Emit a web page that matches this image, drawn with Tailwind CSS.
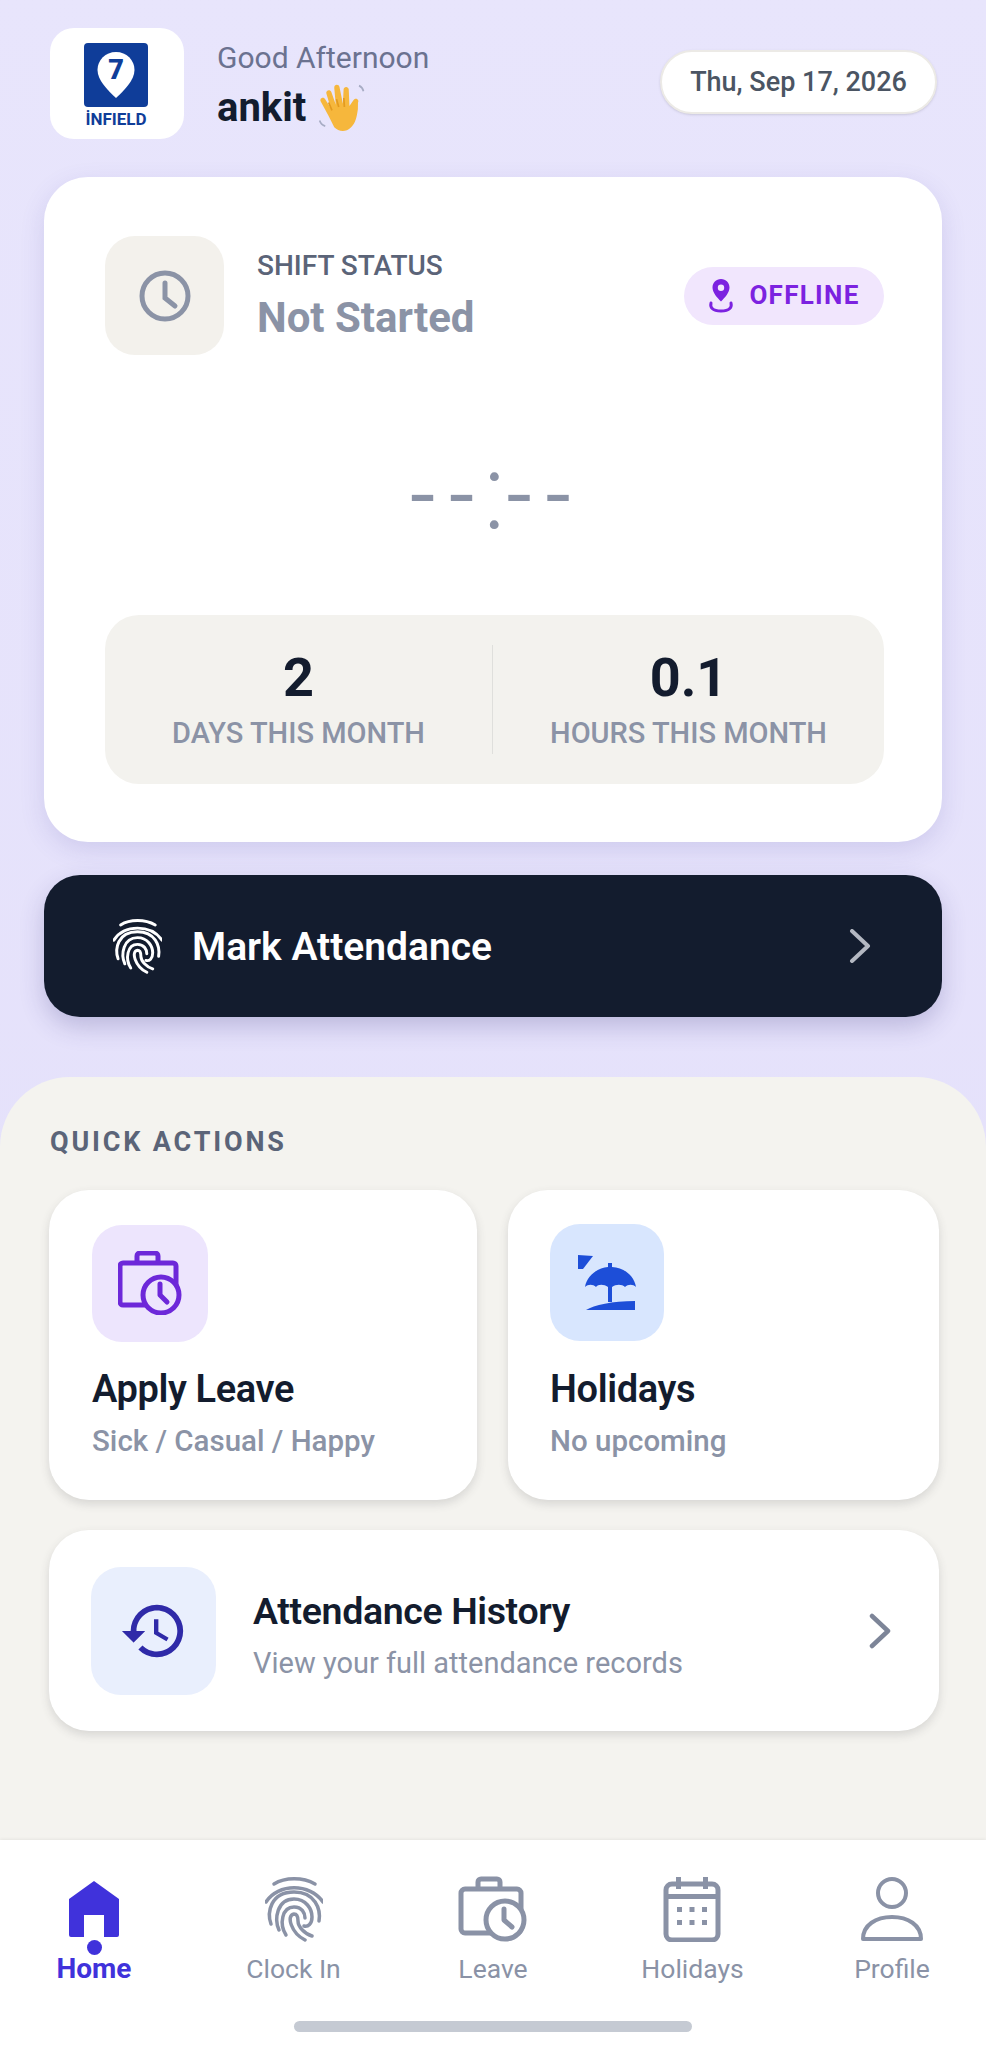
<!doctype html>
<html lang="en">
<head>
<meta charset="utf-8">
<title>Infield</title>
<script src="https://cdn.jsdelivr.net/npm/@tailwindcss/browser@4"></script>
</head>
<body class="font-['Roboto',sans-serif]">
<div class="w-[986px] h-[2048px] overflow-hidden flex flex-col bg-gradient-to-b from-[#e8e5fc] to-[#e3dffa]">

  <!-- header -->
  <header class="flex items-center justify-between pl-[50px] pr-[49px] pt-[28px]">
    <div class="flex items-center gap-[33px]">
      <div class="w-[134px] h-[111px] bg-white rounded-[24px] flex flex-col items-center pt-[15px] pr-[2px]">
        <div class="w-[64px] h-[64px] bg-[#0f3d99] rounded-[4px] flex items-center justify-center relative">
          <svg class="w-[38px] h-[46px]" viewBox="0 0 38 46"><path fill="#fff" d="M19 0C8.500 0 .5 8 .5 18c0 10 10 20 18.500 28C27.500 38 37.500 28 37.500 18 37.500 8 29.500 0 19 0z"/></svg>
          <span class="absolute top-[13px] left-0 right-0 text-center text-[27px] leading-[28px] font-black text-[#0f3d99]">7</span>
        </div>
        <span class="text-[17px] leading-[18px] mt-[3px] font-bold text-[#0f3d99]">İNFIELD</span>
      </div>
      <div class="mt-[6px]">
        <div class="text-[30px] leading-[36px] text-[#6b7290]">Good Afternoon</div>
        <div class="flex items-center gap-[8px] mt-[6px]">
          <span class="text-[40px] leading-[48px] font-bold text-[#131c2e]">ankit</span>
          <svg class="w-[54px] h-[54px] mt-[-2px]" viewBox="0 0 48 48">
            <path fill="#f6b73c" d="M13 32 6 19c-1.400-2.600 2.200-4.600 3.800-2.200l5 8L11 12c-.8-3 3.400-4.200 4.400-1.300l4 11.300L18 7c-.3-3.200 4.100-3.700 4.700-.6l3 14.600.6-12.600c.1-3 4.400-3 4.600.1l.6 14.500 3.700-5.300c1.800-2.500 5.400-.4 3.900 2.400L39 26c-1 7-2 12-6 16-5 5-11 4-15 0z"/>
            <path fill="none" stroke="#e39a1f" stroke-width="1.500" d="M22 24l-2-7M27 24l-.5-8M16 27l-3-7"/>
            <path fill="none" stroke="#a7acc4" stroke-width="1.500" d="M40 5c2 .8 3.500 2.500 4 5M5 36c.8 2.500 2.500 4.200 5 5"/>
          </svg>
        </div>
      </div>
    </div>
    <div class="w-[277px] h-[64px] mt-[-3px] bg-white rounded-full border-2 border-[#eceae6] shadow-sm flex items-center justify-center text-[27px] font-medium text-[#4b5563]">Thu, Sep 17, 2026</div>
  </header>

  <!-- shift status card -->
  <section class="mx-[44px] mt-[38px] h-[665px] bg-white rounded-[44px] shadow-[0_8px_24px_rgba(90,80,170,0.16)] pl-[61px] pr-[58px] pt-[59px]">
    <div class="flex items-center justify-between">
      <div class="flex items-center gap-[33px]">
        <div class="w-[119px] h-[119px] rounded-[30px] bg-[#f3f1ec] flex items-center justify-center">
          <svg class="w-[52px] h-[54px]" viewBox="0 0 52 54" fill="none" stroke="#8b93a6" stroke-width="5" stroke-linecap="round"><circle cx="26" cy="27" r="23"/><path d="M26 14v15l10 8"/></svg>
        </div>
        <div>
          <div class="text-[28px] leading-[34px] font-medium text-[#5b6478]">SHIFT STATUS</div>
          <div class="text-[42px] leading-[50px] mt-[10px] font-bold text-[#8b93a6]">Not Started</div>
        </div>
      </div>
      <div class="w-[200px] h-[58px] rounded-full bg-[#f1e6fd] flex items-center justify-center gap-[15px] text-[26px] font-bold tracking-[0.05em] text-[#7c22e0]">
        <svg class="w-[26px] h-[34px]" viewBox="0 0 26 34" fill="#7c22e0"><path fill-rule="evenodd" d="M13 0C8 0 4.500 3.800 4.500 8.500c0 5 4.500 10 8.500 14 4-4 8.500-9 8.500-14C21.500 3.800 18 0 13 0zm0 5.500a3.200 3.200 0 1 1 0 6.400 3.200 3.200 0 0 1 0-6.400z"/><path fill="none" stroke="#7c22e0" stroke-width="3" stroke-linecap="round" d="M3 24c-1 4 1 8 10 8s11-4 10-8"/></svg>
        <span>OFFLINE</span>
      </div>
    </div>

    <div class="h-[260px] flex items-center justify-center text-[#8b93a6]">
      <span class="font-['Inter'] text-[66px] leading-[80px] font-medium tracking-[0.13em] mt-[18px]">--</span>
      <span class="text-[106px] leading-[106px] font-light mt-[15px] mx-[-2px]">:</span>
      <span class="font-['Inter'] text-[66px] leading-[80px] font-medium tracking-[0.13em] mt-[18px]">--</span>
    </div>

    <div class="h-[169px] rounded-[34px] bg-[#f3f2ee] flex items-center">
      <div class="w-[388px] h-[109px] flex flex-col items-center border-r border-[#dfdfdc]">
        <div class="text-[54px] leading-[62px] mt-[2px] font-bold text-[#131c2e]">2</div>
        <div class="text-[29px] leading-[36px] mt-[6px] font-medium text-[#8b93a6]">DAYS THIS MONTH</div>
      </div>
      <div class="flex-1 h-[109px] flex flex-col items-center">
        <div class="text-[54px] leading-[62px] mt-[2px] font-bold text-[#131c2e]">0.1</div>
        <div class="text-[29px] leading-[36px] mt-[6px] font-medium text-[#8b93a6]">HOURS THIS MONTH</div>
      </div>
    </div>
  </section>

  <!-- mark attendance -->
  <button class="mx-[44px] mt-[33px] h-[142px] rounded-[36px] bg-[#131c2e] shadow-[0_10px_24px_rgba(60,55,130,0.24)] flex items-center justify-between pl-[69px] pr-[71px]">
    <span class="flex items-center gap-[30px]">
      <svg class="w-[49px] h-[55px]" viewBox="0 0 58 65" fill="none" stroke="#fff" stroke-width="3.500" stroke-linecap="round">
        <path d="M9 7C20 0 38 0 50 7"/><path d="M1 25C13 6 45 6 58 25"/><path d="M6 47C2 36 5 15 29 15 50 15 56 32 54 44"/><path d="M14 53C9 42 12 22 29 22 41 22 47 32 47 40 47 47 43 50 39 49"/><path d="M21 58C14 47 17 30 29 30 37 30 40 36 40 41"/><path d="M40 63C26 56 21 38 29 37 33 37 33 41 33 44 33 50 40 57 47 59"/>
      </svg>
      <span class="text-[39px] mt-[2px] font-semibold text-white">Mark Attendance</span>
    </span>
    <svg class="w-[22px] h-[34px]" viewBox="0 0 22 34" fill="none" stroke="#b4b8c2" stroke-width="4" stroke-linecap="round" stroke-linejoin="round"><path d="M3 2l16 15L3 32"/></svg>
  </button>

  <!-- quick actions sheet -->
  <main class="mt-[60px] flex-1 bg-[#f4f3ef] rounded-t-[70px] pl-[49px] pr-[47px] pt-[50px]">
    <h2 class="text-[27px] leading-[30px] font-bold tracking-[0.105em] text-[#5b6478] pl-[1px]">QUICK ACTIONS</h2>
    <div class="grid grid-cols-[428px_431px] gap-[31px] mt-[33px]">
      <div class="h-[310px] bg-white rounded-[40px] shadow-[0_4px_10px_rgba(60,60,70,0.16)] pl-[43px] pt-[35px]">
        <div class="w-[116px] h-[117px] rounded-[30px] bg-[#ede5fd] flex items-center justify-center">
          <svg class="w-[65px] h-[64px] mt-[-2px]" viewBox="0 0 65 64" fill="none" stroke="#6d28d9" stroke-width="5" stroke-linejoin="round"><path d="M19 12V5a3 3 0 0 1 3-3h15a3 3 0 0 1 3 3v7"/><rect x="2" y="12" width="56" height="42" rx="3"/><circle cx="43" cy="44" r="18" fill="#ede5fd"/><path d="M42 33v11l7 7" stroke-linecap="round"/></svg>
        </div>
        <div class="text-[38px] leading-[44px] mt-[25px] font-semibold tracking-[-0.01em] text-[#131c2e]">Apply Leave</div>
        <div class="text-[29.5px] leading-[36px] mt-[12px] font-medium text-[#8b93a6]">Sick / Casual / Happy</div>
      </div>
      <div class="h-[310px] bg-white rounded-[40px] shadow-[0_4px_10px_rgba(60,60,70,0.16)] pl-[42px] pt-[34px]">
        <div class="w-[114px] h-[117px] rounded-[30px] bg-[#d8e6fe] flex items-center justify-center">
          <svg class="w-[58px] h-[58px]" viewBox="0 0 58 58" fill="#1d4ed8"><path d="M0 1l15 1L5 15H0z"/><path d="M7 33C9 21 20 14 30 13V9h4v4c12 1 22 8 24 20-3-3-8-3-11 0-3-3-9-3-13 0v15h-4V33c-4-3-10-3-12 0-3-3-8-3-11 0z"/><path d="M8 56c8-5 26-9 49-9v9z"/></svg>
        </div>
        <div class="text-[38px] leading-[44px] mt-[26px] font-semibold tracking-[-0.01em] text-[#131c2e]">Holidays</div>
        <div class="text-[29.5px] leading-[36px] mt-[12px] font-medium text-[#8b93a6]">No upcoming</div>
      </div>
    </div>
    <div class="h-[201px] mt-[30px] bg-white rounded-[40px] shadow-[0_4px_10px_rgba(60,60,70,0.16)] flex items-center pl-[42px] pr-[48px]">
      <div class="w-[125px] h-[128px] rounded-[30px] bg-[#e9effd] flex items-center justify-center shrink-0">
        <svg class="w-[70px] h-[70px]" viewBox="0 0 24 24" fill="#2f2aa8"><path d="M13 3a9 9 0 0 0-9 9H1l3.890 3.890.07.14L9 12H6c0-3.870 3.130-7 7-7s7 3.130 7 7-3.130 7-7 7c-1.930 0-3.680-.79-4.940-2.060l-1.420 1.420A8.954 8.954 0 0 0 13 21a9 9 0 0 0 0-18zm-1 5v5l4.280 2.540.72-1.210-3.500-2.080V8H12z"/></svg>
      </div>
      <div class="ml-[37px] flex-1">
        <div class="text-[37.5px] leading-[44px] mt-[8px] font-semibold tracking-[-0.01em] text-[#131c2e]">Attendance History</div>
        <div class="text-[29px] leading-[36px] mt-[12px] text-[#8b93a6]">View your full attendance records</div>
      </div>
      <svg class="w-[22px] h-[36px]" viewBox="0 0 22 36" fill="none" stroke="#7d8598" stroke-width="4.500" stroke-linecap="round" stroke-linejoin="round"><path d="M3 3l16 15L3 33"/></svg>
    </div>
  </main>

  <!-- bottom nav -->
  <nav class="h-[208px] bg-white pt-[36px] flex flex-col items-center shadow-[0_-1px_3px_rgba(0,0,0,0.06)]">
    <div class="w-full flex justify-between px-[46px]">
      <div class="w-[96px] flex flex-col items-center relative">
        <div class="h-[66px] flex items-center justify-center">
          <svg class="w-[52px] h-[56px]" viewBox="0 0 52 56" fill="#4032db"><path d="M26 0l25 18v36a2 2 0 0 1-2 2H36V34H16v22H3a2 2 0 0 1-2-2V18z"/></svg>
        </div>
        <span class="absolute top-[64px] w-[15px] h-[15px] rounded-full bg-[#4032db]"></span>
        <span class="text-[28px] leading-[30px] mt-[12px] font-bold text-[#4032db]">Home</span>
      </div>
      <div class="w-[96px] flex flex-col items-center">
        <div class="h-[66px] flex items-center justify-center">
          <svg class="w-[58px] h-[65px]" viewBox="0 0 58 65" fill="none" stroke="#8a92a6" stroke-width="3.500" stroke-linecap="round">
            <path d="M9 7C20 0 38 0 50 7"/><path d="M1 25C13 6 45 6 58 25"/><path d="M6 47C2 36 5 15 29 15 50 15 56 32 54 44"/><path d="M14 53C9 42 12 22 29 22 41 22 47 32 47 40 47 47 43 50 39 49"/><path d="M21 58C14 47 17 30 29 30 37 30 40 36 40 41"/><path d="M40 63C26 56 21 38 29 37 33 37 33 41 33 44 33 50 40 57 47 59"/>
          </svg>
        </div>
        <span class="text-[26.5px] leading-[30px] mt-[12px] text-[#8a92a6] whitespace-nowrap">Clock In</span>
      </div>
      <div class="w-[96px] flex flex-col items-center">
        <div class="h-[66px] flex items-center justify-center">
          <svg class="w-[70px] h-[66px]" viewBox="0 0 70 66" fill="none" stroke="#8a92a6" stroke-width="5" stroke-linejoin="round"><path d="M20 13V6a3 3 0 0 1 3-3h16a3 3 0 0 1 3 3v7"/><rect x="3" y="13" width="60" height="44" rx="4"/><circle cx="47" cy="44" r="19" fill="#fff"/><path d="M46 33v11l8 7" stroke-linecap="round"/></svg>
        </div>
        <span class="text-[26.5px] leading-[30px] mt-[12px] text-[#8a92a6]">Leave</span>
      </div>
      <div class="w-[96px] flex flex-col items-center">
        <div class="h-[66px] flex items-center justify-center pr-[2px]">
          <svg class="w-[58px] h-[66px]" viewBox="0 0 58 66" fill="#8a92a6"><rect x="3" y="8" width="52" height="56" rx="6" fill="none" stroke="#8a92a6" stroke-width="5"/><path d="M13 1h5v12h-5zM40 1h5v12h-5zM3 18h52v5H3z"/><path d="M14 31h5v5h-5zM26.500 31h5v5h-5zM39 31h5v5h-5zM14 44h5v5h-5zM26.500 44h5v5h-5zM39 44h5v5h-5z"/></svg>
        </div>
        <span class="text-[26.5px] leading-[30px] mt-[12px] text-[#8a92a6]">Holidays</span>
      </div>
      <div class="w-[96px] flex flex-col items-center">
        <div class="h-[66px] flex items-center justify-center">
          <svg class="w-[62px] h-[64px]" viewBox="0 0 62 64" fill="none" stroke="#8a92a6" stroke-width="4"><circle cx="31" cy="16" r="14"/><path d="M2 62C2 48 15 40 31 40s29 8 29 22z" stroke-linejoin="round"/></svg>
        </div>
        <span class="text-[26.5px] leading-[30px] mt-[12px] text-[#8a92a6]">Profile</span>
      </div>
    </div>
    <div class="w-[398px] h-[11px] mt-[37px] rounded-full bg-[#c5cad3]"></div>
  </nav>
</div>
</body>
</html>
